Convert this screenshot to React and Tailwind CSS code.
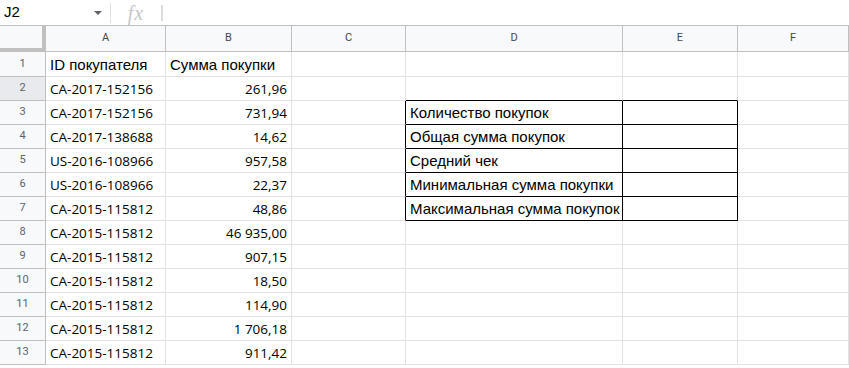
import React from 'react';

const ids = [
  'CA-2017-152156',
  'CA-2017-152156',
  'CA-2017-138688',
  'US-2016-108966',
  'US-2016-108966',
  'CA-2015-115812',
  'CA-2015-115812',
  'CA-2015-115812',
  'CA-2015-115812',
  'CA-2015-115812',
  'CA-2015-115812',
  'CA-2015-115812',
];

const sums = ['261,96', '731,94', '14,62', '957,58', '22,37', '48,86', '46 935,00', '907,15', '18,50', '114,90', '1 706,18', '911,42'];

const labels = {
  3: 'Количество покупок',
  4: 'Общая сумма покупок',
  5: 'Средний чек',
  6: 'Минимальная сумма покупки',
  7: 'Максимальная сумма покупок',
};

const cols = ['A', 'B', 'C', 'D', 'E', 'F'];

function inBox(row, col) {
  return row >= 3 && row <= 7 && (col === 'D' || col === 'E');
}

function Cell({ row, col, children, align }) {
  // sheets style: each cell owns its right and bottom line
  const right = inBox(row, col) || (col === 'C' && row >= 3 && row <= 7) ? 'border-r-black' : 'border-r-[#e2e2e2]';
  const bottom = inBox(row, col) || (row === 2 && (col === 'D' || col === 'E')) ? 'border-b-black' : 'border-b-[#e2e2e2]';
  return (
    <div
      className={`border-r border-b ${right} ${bottom} flex items-center overflow-hidden whitespace-nowrap px-[4px] pt-[2px] ${
        align === 'right' ? 'justify-end' : 'justify-start'
      }`}
    >
      {children}
    </div>
  );
}

export default function App() {
  const rows = Array.from({ length: 13 }, (_, i) => i + 1);

  return (
    <div className="w-[849px] h-[368px] overflow-hidden bg-white text-black font-['Liberation_Sans',Arial,sans-serif]">
      {/* formula bar */}
      <div className="h-[26px] flex items-center border-b border-[#c0c0c0]">
        <div className="w-[110px] flex items-center justify-between pl-[4px] pr-[8px]">
          <span className="text-[15px] text-black">J2</span>
          <span className="w-0 h-0 border-l-[4px] border-r-[4px] border-t-[4px] border-l-transparent border-r-transparent border-t-[#5f6368]" />
        </div>
        <div className="w-px h-[20px] bg-[#e0e0e0]" />
        <div className="w-[50px] flex items-center justify-center">
          <span className="font-['Liberation_Serif',serif] italic text-[20px] text-[#c4c7c5] tracking-[1px]">fx</span>
        </div>
        <div className="w-[2px] h-[16px] bg-[#dadce0]" />
      </div>

      <div className="grid grid-cols-[46px_120px_126px_114px_217px_115px_1fr] grid-rows-[26px_25px_repeat(12,24px)]">
        {/* header row */}
        <div className="bg-[#f8f9fa] border-r-4 border-b-4 border-[#c0c0c0]" />
        {cols.map((c) => (
          <div
            key={c}
            className="bg-[#f8f9fa] border-r border-b border-[#c0c0c0] flex items-center justify-center text-[11px] text-[#444746] font-['Roboto',sans-serif]"
          >
            {c}
          </div>
        ))}

        {rows.map((r) => (
          <React.Fragment key={r}>
            <div
              className={`border-r border-b border-[#c0c0c0] flex items-center justify-center text-[11px] text-[#5f6368] font-['Roboto',sans-serif] ${
                r === 2 ? 'bg-[#e8eaed]' : 'bg-[#f8f9fa]'
              }`}
            >
              {r}
            </div>
            {cols.map((c) => {
              let content = null;
              let align = 'left';
              if (r === 1 && c === 'A') content = <span className="text-[15px]">ID покупателя</span>;
              if (r === 1 && c === 'B') content = <span className="text-[15px]">Сумма покупки</span>;
              if (r > 1 && c === 'A') content = <span className="text-[13.5px] font-['Open_Sans',sans-serif]">{ids[r - 2]}</span>;
              if (r > 1 && c === 'B') {
                content = <span className="text-[13.5px] font-['Open_Sans',sans-serif]">{sums[r - 2]}</span>;
                align = 'right';
              }
              if (c === 'D' && labels[r]) content = <span className="text-[15px]">{labels[r]}</span>;
              return (
                <Cell key={c} row={r} col={c} align={align}>
                  {content}
                </Cell>
              );
            })}
          </React.Fragment>
        ))}
      </div>
    </div>
  );
}
